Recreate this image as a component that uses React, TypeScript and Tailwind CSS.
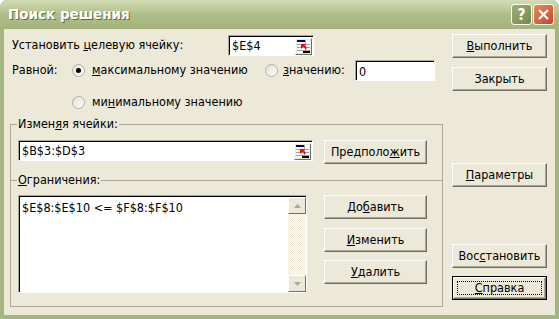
import React from "react";

// classic beveled push button
const Btn = ({
  children,
  className = "",
  isDefault = false,
}: {
  children: React.ReactNode;
  className?: string;
  isDefault?: boolean;
}) => {
  if (isDefault) {
    return (
      <div className={"border border-black bg-[#ECE9D8] " + className}>
        <div className="h-full border border-t-white border-l-white border-r-[#716F64] border-b-[#716F64] shadow-[inset_-1px_-1px_#ACA899] p-[3px]">
          <div className="h-full border border-dotted border-black flex items-center justify-center">
            {children}
          </div>
        </div>
      </div>
    );
  }
  return (
    <div
      className={
        "flex items-center justify-center bg-[#ECE9D8] border border-t-white border-l-white border-r-[#716F64] border-b-[#716F64] shadow-[inset_-1px_-1px_#ACA899] " +
        className
      }
    >
      {children}
    </div>
  );
};

// little range picker button used inside ref-edit boxes
const RefEditIcon = () => (
  <div className="w-[17px] h-[17px] bg-[#ECE9D8] border border-t-white border-l-white border-r-[#716F64] border-b-[#716F64] flex items-center justify-center">
    <svg width="13" height="13" viewBox="0 0 13 13">
      <rect x="0" y="0" width="13" height="13" fill="#fff" />
      <line x1="0" y1="4.5" x2="13" y2="4.5" stroke="#A0A0A0" />
      <line x1="0" y1="7.5" x2="13" y2="7.5" stroke="#A0A0A0" />
      <line x1="0" y1="10.5" x2="13" y2="10.5" stroke="#A0A0A0" />
      <line x1="8.5" y1="0" x2="8.5" y2="13" stroke="#A0A0A0" />
      <rect x="0" y="0" width="8" height="2" fill="#000080" />
      <rect x="6" y="11" width="7" height="2" fill="#000" />
      <polygon points="4,4 9,4 7.5,5.5 10,8 8.8,9.2 6.3,6.7 4,9" fill="#FF0000" />
    </svg>
  </div>
);

const RefEdit = ({ value, className = "" }: { value: string; className?: string }) => (
  <div
    className={
      "flex items-center bg-white border border-t-[#ACA899] border-l-[#ACA899] border-r-white border-b-white shadow-[inset_1px_1px_#000] " +
      className
    }
  >
    <span className="flex-1 pl-[3px] pt-[1px]">{value}</span>
    <div className="mr-px mt-px">
      <RefEditIcon />
    </div>
  </div>
);

const Radio = ({ checked = false }: { checked?: boolean }) => (
  <div className="w-[13px] h-[13px] rounded-full border border-[#B2AFA0] bg-gradient-to-br from-[#E0DFD8] to-white flex items-center justify-center shrink-0">
    {checked && <div className="w-[5px] h-[5px] rounded-full bg-black" />}
  </div>
);

const Arrow = ({ up }: { up?: boolean }) => (
  <svg width="7" height="4" viewBox="0 0 7 4">
    <polygon points={up ? "0,4 7,4 3.5,0" : "0,0 7,0 3.5,4"} fill="#ACA899" />
  </svg>
);

const App: React.FC = () => {
  return (
    <div className="w-[559px] h-[319px] overflow-hidden flex flex-col bg-[#A6B57F] font-['DejaVu_Sans_Condensed','DejaVu_Sans',sans-serif] text-[12.5px] text-black rounded-t-[7px]">
      {/* Title bar */}
      <div className="h-[29px] shrink-0 flex items-center pl-[8px] pr-[5px] rounded-t-[7px] bg-gradient-to-b from-[#D3DCB4] via-[#B0BF8A] to-[#A3B37B]">
        <span className="flex-1 text-white font-bold text-[13.5px] font-['DejaVu_Sans',sans-serif] [text-shadow:1px_1px_#5E6E3C]">
          Поиск решения
        </span>
        <div className="w-[21px] h-[21px] rounded-[3px] border border-white bg-gradient-to-br from-[#9EAE78] to-[#76874F] flex items-center justify-center text-white font-bold text-[16px] leading-none">
          ?
        </div>
        <div className="ml-px w-[21px] h-[21px] rounded-[3px] border border-white bg-gradient-to-br from-[#E98A5F] to-[#C4461C] flex items-center justify-center">
          <svg width="11" height="11" viewBox="0 0 11 11">
            <path d="M1 1 L10 10 M10 1 L1 10" stroke="#fff" strokeWidth="2.2" />
          </svg>
        </div>
      </div>

      {/* Body */}
      <div className="flex-1 mx-[4px] mb-[4px] bg-[#ECE9D8] flex">
        {/* Left column */}
        <div className="w-[433px] ml-[6px] flex flex-col">
          <div className="mt-[6px] h-[21px] flex items-center">
            <span className="w-[218px] pl-[2px]">
              Установить <u>ц</u>елевую ячейку:
            </span>
            <RefEdit value="$E$4" className="w-[86px] h-[21px]" />
          </div>

          <div className="mt-[4px] h-[21px] flex items-center">
            <span className="w-[62px] pl-[2px]">Равной:</span>
            <div className="w-[193px] flex items-center">
              <Radio checked />
              <span className="ml-[7px]">
                <u>м</u>аксимальному значению
              </span>
            </div>
            <div className="w-[90px] flex items-center">
              <Radio />
              <span className="ml-[5px]">
                <u>з</u>начению:
              </span>
            </div>
            <div className="w-[80px] h-[21px] bg-white border border-t-[#ACA899] border-l-[#ACA899] border-r-white border-b-white shadow-[inset_1px_1px_#000] pl-[3px] pt-[2px]">
              0
            </div>
          </div>

          <div className="mt-[11px] h-[20px] flex items-center pl-[62px]">
            <Radio />
            <span className="ml-[7px]">
              ми<u>н</u>имальному значению
            </span>
          </div>

          {/* Group: changing cells */}
          <fieldset className="mt-[5px] h-[63px] border border-b-0 border-[#ACA899]">
            <legend className="ml-[6px] px-px leading-[14px]">
              Измен<u>я</u>я ячейки:
            </legend>
            <div className="mt-[9px] pl-[7px] flex items-start">
              <RefEdit value="$B$3:$D$3" className="w-[295px] h-[21px]" />
              <Btn className="ml-[11px] w-[103px] h-[24px]">
                Предполо<u>ж</u>ить
              </Btn>
            </div>
          </fieldset>

          {/* Group: constraints */}
          <fieldset className="-mt-[7px] border border-[#ACA899]">
            <legend className="ml-[6px] px-px leading-[14px]">
              <u>О</u>граничения:
            </legend>
            <div className="mt-[8px] pl-[7px] pb-[13px] flex items-start">
              <div className="w-[289px] h-[98px] flex bg-white border border-t-[#ACA899] border-l-[#ACA899] border-r-white border-b-white shadow-[inset_1px_1px_#000]">
                <div className="flex-1 pl-[3px] pt-[3px]">$E$8:$E$10 &lt;= $F$8:$F$10</div>
                <div className="w-[18px] flex flex-col mt-px">
                  <div className="h-[17px] bg-[#ECE9D8] border border-t-white border-l-white border-r-[#716F64] border-b-[#716F64] flex items-center justify-center">
                    <Arrow up />
                  </div>
                  <div className="flex-1 bg-[repeating-conic-gradient(#fff_0_25%,#ECE9D8_0_50%)] bg-[length:2px_2px]" />
                  <div className="h-[17px] bg-[#ECE9D8] border border-t-white border-l-white border-r-[#716F64] border-b-[#716F64] flex items-center justify-center">
                    <Arrow />
                  </div>
                </div>
              </div>
              <div className="ml-[17px] flex flex-col">
                <Btn className="w-[103px] h-[24px]">
                  До<u>б</u>авить
                </Btn>
                <Btn className="mt-[9px] w-[103px] h-[24px]">
                  <u>И</u>зменить
                </Btn>
                <Btn className="mt-[8px] w-[103px] h-[24px]">
                  <u>У</u>далить
                </Btn>
              </div>
            </div>
          </fieldset>
        </div>

        {/* Right column */}
        <div className="w-[95px] ml-[9px] flex flex-col">
          <Btn className="mt-[5px] h-[24px]">
            <u>В</u>ыполнить
          </Btn>
          <Btn className="mt-[9px] h-[24px]">Закрыть</Btn>
          <Btn className="mt-[72px] h-[24px]">
            <u>П</u>араметры
          </Btn>
          <Btn className="mt-[57px] h-[24px]">
            Вос<u>с</u>тановить
          </Btn>
          <Btn isDefault className="mt-[8px] h-[24px]">
            <u>С</u>правка
          </Btn>
        </div>
      </div>
    </div>
  );
};

export default App;
